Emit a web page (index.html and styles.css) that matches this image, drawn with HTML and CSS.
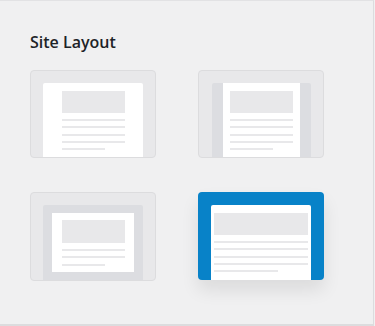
FILE: index.html
```html
<!DOCTYPE html>
<html>
<head>
<meta charset="utf-8">
<link rel="stylesheet" href="styles.css">
</head>
<body>
<div class="panel">
  <h2 class="title">Site Layout</h2>
  <div class="grid">
    <div class="card card-wide">
      <div class="page">
        <div class="hdr"></div>
        <div class="lines"><i></i><i></i><i></i><i></i><i class="short"></i></div>
      </div>
    </div>
    <div class="card card-boxed">
      <div class="frame">
        <div class="page">
          <div class="hdr"></div>
          <div class="lines"><i></i><i></i><i></i><i></i><i class="short"></i></div>
        </div>
      </div>
    </div>
    <div class="card card-padded">
      <div class="frame">
        <div class="page">
          <div class="hdr"></div>
          <div class="lines"><i></i><i></i><i class="short"></i></div>
        </div>
      </div>
    </div>
    <div class="card card-full selected">
      <div class="page">
        <div class="hdr"></div>
        <div class="lines"><i></i><i></i><i></i><i></i><i class="short"></i></div>
      </div>
    </div>
  </div>
</div>
</body>
</html>
```
FILE: styles.css
```css
html, body {
  margin: 0;
  padding: 0;
  background: #f0f0f1;
}
.panel {
  box-sizing: border-box;
  width: 374px;
  height: 326px;
  border-top: 1px solid #e2e2e4;
  border-right: 1px solid #dcdcde;
  border-bottom: 2px solid #dcdcde;
  padding: 31px 0 0 30px;
  font-family: "Open Sans", "Noto Sans", sans-serif;
}
.title {
  margin: 0 0 18px;
  font-size: 16px;
  line-height: 20px;
  font-weight: 600;
  color: #1d2327;
}
.grid {
  display: grid;
  grid-template-columns: 126px 126px;
  grid-template-rows: 88px 89px;
  column-gap: 42px;
  row-gap: 34px;
}
.card {
  box-sizing: border-box;
  border: 1px solid #dcdcde;
  border-radius: 4px;
  background: #e8e8ea;
  overflow: hidden;
  display: flex;
  justify-content: center;
  padding-top: 12px;
}
.page {
  background: #fff;
  box-sizing: border-box;
  display: flex;
  flex-direction: column;
  align-items: center;
  padding-top: 8px;
}
.hdr {
  width: 63px;
  height: 22px;
  background: #e8e8ea;
}
.lines {
  display: flex;
  flex-direction: column;
  gap: 5.3px;
  margin-top: 6px;
  width: 63px;
}
.lines i {
  display: block;
  height: 2px;
  background: #e8e8ea;
}
.lines i.short {
  width: 43px;
}
/* wide */
.card-wide .page {
  width: 100px;
  border-radius: 2px 2px 0 0;
}
/* boxed */
.card-boxed .frame {
  width: 99px;
  background: #dcdde1;
  display: flex;
  justify-content: center;
  border-radius: 2px 2px 0 0;
}
.card-boxed .page {
  width: 77px;
}
/* padded */
.card-padded .frame {
  width: 100px;
  background: #dcdde1;
  padding: 8px 9px 0;
  box-sizing: border-box;
  border-radius: 2px 2px 0 0;
}
.card-padded .page {
  width: 82px;
  height: 59px;
  padding-top: 7px;
}
.card-padded .hdr {
  height: 23px;
}
/* full */
.card-full {
  border: none;
  background: #0882c8;
  box-shadow: 0 10px 18px rgba(0, 0, 0, 0.09);
  padding-top: 13px;
  height: 88px;
}
.card-full .page {
  width: 100px;
  border-radius: 2px 2px 0 0;
  padding: 8px 3px 0;
}
.card-full .hdr,
.card-full .lines {
  width: 94px;
}
.card-full .lines i.short {
  width: 64px;
}
```
